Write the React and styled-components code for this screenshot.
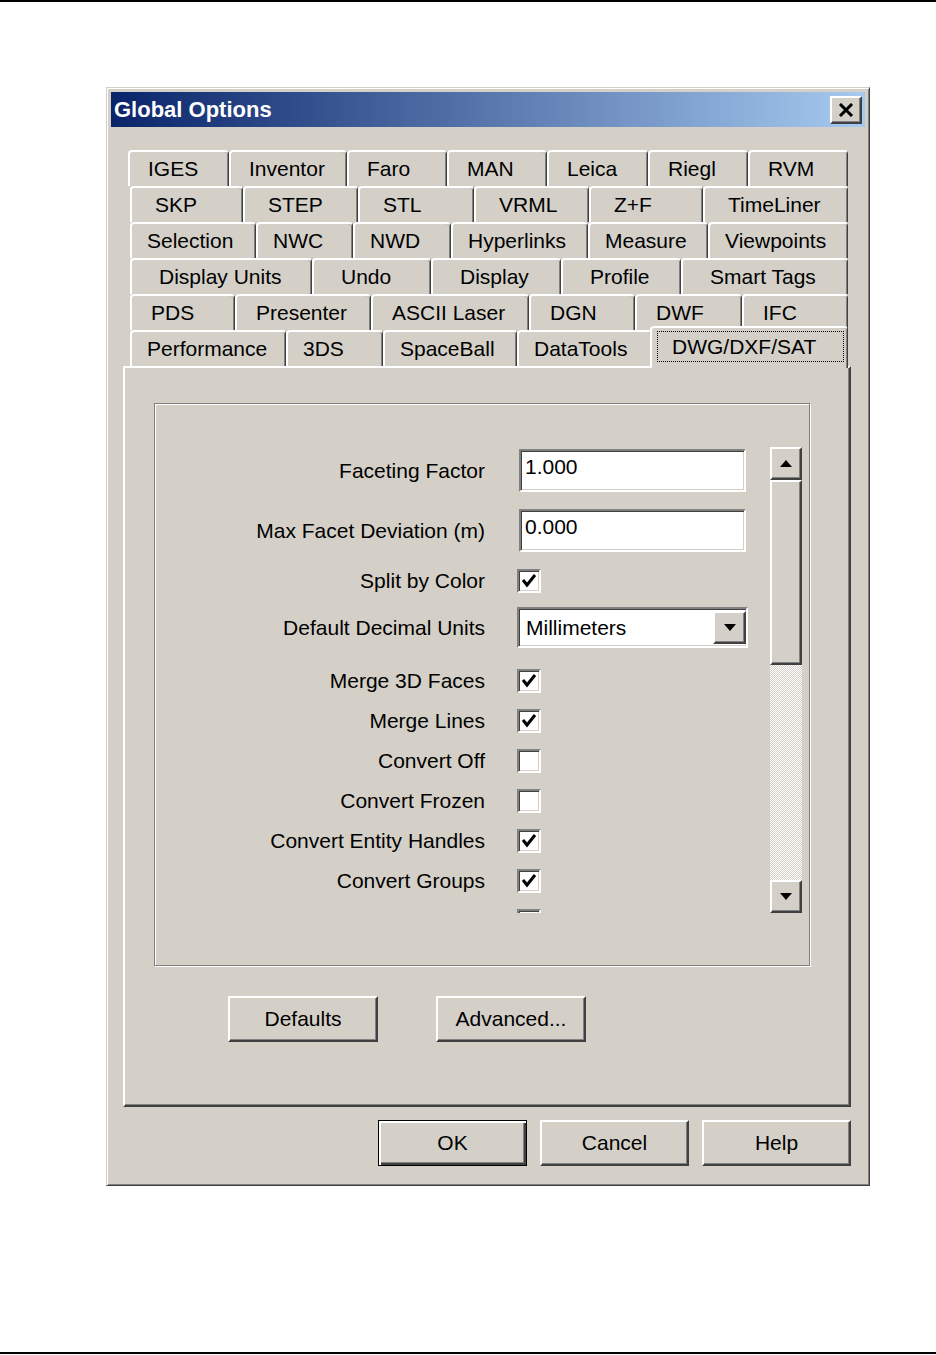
import React from 'react';
import styled, { createGlobalStyle, css } from 'styled-components';

const GlobalStyle = createGlobalStyle`
  html, body {
    margin: 0;
    padding: 0;
    background: #fff;
  }
  body {
    font-family: "Liberation Sans", Arial, sans-serif;
    color: #000;
  }
`;

const raised = css`
  border: 2px solid;
  border-color: #fff #404040 #404040 #fff;
  box-shadow: inset -1px -1px #808080;
`;

const sunken = css`
  border: 2px solid;
  border-color: #808080 #fff #fff #808080;
  box-shadow: inset 1px 1px #404040, inset -1px -1px #d4d0c8;
`;

const Page = styled.div`
  height: 1355px;
  display: flex;
  flex-direction: column;
`;

const Rule = styled.div`
  height: 2px;
  background: #000;
  flex-shrink: 0;
  margin-bottom: ${p => p.$mb || 0}px;
`;

const Spacer = styled.div`
  flex: 1;
`;

const Dialog = styled.div`
  width: 764px;
  height: 1099px;
  box-sizing: border-box;
  margin: 85px 0 0 106px;
  background: #d4d0c8;
  border: 1px solid;
  border-color: #d4d0c8 #404040 #404040 #d4d0c8;
  box-shadow: inset 1px 1px #fff, inset -1px -1px #808080;
  padding: 4px;
  display: flex;
  flex-direction: column;
`;

const TitleBar = styled.div`
  height: 35px;
  display: flex;
  align-items: center;
  justify-content: space-between;
  padding: 0 3px;
  background: linear-gradient(to right, #0a246a, #a6caf0);
  flex-shrink: 0;
`;

const TitleText = styled.span`
  color: #fff;
  font-weight: bold;
  font-size: 22px;
`;

const CloseButton = styled.div`
  width: 32px;
  height: 28px;
  box-sizing: border-box;
  background: #d4d0c8;
  ${raised};
  display: flex;
  align-items: center;
  justify-content: center;
`;

const Body = styled.div`
  margin: 23px 0 0 12px;
  width: 728px;
  display: flex;
  flex-direction: column;
`;

const TabRow = styled.div`
  height: 36px;
  display: flex;
  align-items: flex-end;
  padding-left: ${p => p.$indent}px;
`;

const Tab = styled.div`
  position: relative;
  box-sizing: border-box;
  width: ${p => p.$w}px;
  height: 36px;
  flex-shrink: 0;
  display: flex;
  align-items: center;
  justify-content: flex-start;
  padding-left: ${p => p.$pad - 2}px;
  background: #d4d0c8;
  border-top: 2px solid #fff;
  border-left: 2px solid #fff;
  border-right: 1px solid #404040;
  box-shadow: inset -1px 0 #808080;
  border-radius: 4px 4px 0 0;
  font-size: 21px;
  white-space: nowrap;

  ${p => p.$active && css`
    z-index: 1;
    width: ${p.$w + 2}px;
    height: 42px;
    margin: 0 -2px -2px -2px;
    padding: 3px 3px 6px 5px;
    align-items: stretch;
  `}
`;

const FocusBox = styled.span`
  flex: 1;
  display: flex;
  align-items: center;
  border: 1px dotted #000;
  padding-left: 14px;
`;

const Panel = styled.div`
  height: 741px;
  box-sizing: border-box;
  border: 2px solid;
  border-color: #fff #404040 #404040 #fff;
  box-shadow: inset -1px -1px #808080;
  padding: 35px 0 0 29px;
  display: flex;
  flex-direction: column;
`;

const GroupBox = styled.div`
  width: 656px;
  height: 563px;
  box-sizing: border-box;
  border: 1px solid #808080;
  box-shadow: inset 1px 1px #fff, 1px 1px #fff;
  padding: 43px 7px 0 1px;
  display: flex;
  align-items: flex-start;
`;

const Viewport = styled.div`
  flex: 1;
  height: 466px;
  overflow: hidden;
`;

const FieldRow = styled.div`
  display: flex;
  align-items: center;
  gap: 32px;
  height: ${p => p.$h}px;
  margin-top: ${p => p.$mt}px;
`;

const Label = styled.div`
  width: 329px;
  text-align: right;
  font-size: 21px;
  white-space: nowrap;
`;

const TextInput = styled.div`
  box-sizing: border-box;
  width: 227px;
  height: 43px;
  margin-left: 2px;
  background: #fff;
  ${sunken};
  font-size: 21px;
  padding: 4px 4px;
`;

const Select = styled.div`
  box-sizing: border-box;
  width: 231px;
  height: 41px;
  background: #fff;
  ${sunken};
  display: flex;
  align-items: center;
  justify-content: space-between;
  padding: 0 0 0 7px;
  font-size: 21px;
`;

const DropButton = styled.div`
  width: 33px;
  height: 33px;
  box-sizing: border-box;
  background: #d4d0c8;
  ${raised};
  display: flex;
  align-items: center;
  justify-content: center;
`;

const Check = styled.div`
  width: 24px;
  height: 24px;
  box-sizing: border-box;
  background: #fff;
  ${sunken};
  display: flex;
  align-items: center;
  justify-content: center;
`;

const ScrollBar = styled.div`
  width: 32px;
  height: 466px;
  display: flex;
  flex-direction: column;
`;

const ScrollButton = styled.div`
  height: 33px;
  box-sizing: border-box;
  background: #d4d0c8;
  ${raised};
  display: flex;
  align-items: center;
  justify-content: center;
  flex-shrink: 0;
`;

const Thumb = styled.div`
  height: 185px;
  box-sizing: border-box;
  background: #d4d0c8;
  ${raised};
  flex-shrink: 0;
`;

const Track = styled.div`
  flex: 1;
  background: repeating-conic-gradient(#fff 0 25%, #d4d0c8 0 50%) 0 0 / 2px 2px;
`;

const ButtonRow = styled.div`
  display: flex;
  gap: ${p => p.$gap}px;
  margin-top: ${p => p.$mt}px;
  padding-left: ${p => p.$pl || 0}px;
  justify-content: ${p => p.$end ? 'flex-end' : 'flex-start'};
`;

const Button = styled.div`
  width: ${p => p.$w}px;
  height: 46px;
  box-sizing: border-box;
  background: #d4d0c8;
  display: flex;
  align-items: center;
  justify-content: center;
  font-size: 21px;
  ${raised};
  ${p => p.$default && css`
    border: 1px solid #000;
    box-shadow: inset 2px 2px #fff, inset -2px -2px #404040, inset -3px -3px #808080;
  `}
`;

// text sits left-aligned in each tab; Windows spreads the spare room as padding per row
const tabRows = [
  { indent: 5, pad: 20, tabs: [['IGES', 101], ['Inventor', 118], ['Faro', 100], ['MAN', 100], ['Leica', 101], ['Riegl', 100], ['RVM', 100]] },
  { indent: 7, pad: 25, tabs: [['SKP', 113], ['STEP', 115], ['STL', 116], ['VRML', 115], ['Z+F', 114], ['TimeLiner', 145]] },
  { indent: 7, pad: 17, tabs: [['Selection', 126], ['NWC', 97], ['NWD', 98], ['Hyperlinks', 137], ['Measure', 120], ['Viewpoints', 140]] },
  { indent: 7, pad: 29, tabs: [['Display Units', 182], ['Undo', 119], ['Display', 130], ['Profile', 120], ['Smart Tags', 167]] },
  { indent: 7, pad: 21, tabs: [['PDS', 105], ['Presenter', 136], ['ASCII Laser', 158], ['DGN', 106], ['DWF', 107], ['IFC', 106]] },
  { indent: 7, pad: 17, tabs: [['Performance', 156], ['3DS', 97], ['SpaceBall', 134], ['DataTools', 135], ['DWG/DXF/SAT', 196]] },
];

const fields = [
  { label: 'Faceting Factor', type: 'text', value: '1.000', mt: 2 },
  { label: 'Max Facet Deviation (m)', type: 'text', value: '0.000', mt: 17 },
  { label: 'Split by Color', type: 'check', checked: true, mt: 17 },
  { label: 'Default Decimal Units', type: 'select', value: 'Millimeters', mt: 14 },
  { label: 'Merge 3D Faces', type: 'check', checked: true, mt: 21 },
  { label: 'Merge Lines', type: 'check', checked: true, mt: 16 },
  { label: 'Convert Off', type: 'check', checked: false, mt: 16 },
  { label: 'Convert Frozen', type: 'check', checked: false, mt: 16 },
  { label: 'Convert Entity Handles', type: 'check', checked: true, mt: 16 },
  { label: 'Convert Groups', type: 'check', checked: true, mt: 16 },
  { label: '', type: 'check', checked: false, mt: 16 },
];

const Arrow = ({ up }) => (
  <svg width="12" height="7" viewBox="0 0 12 7">
    <path d={up ? 'M0 7 L6 0 L12 7 Z' : 'M0 0 L12 0 L6 7 Z'} fill="#000" />
  </svg>
);

const CheckMark = () => (
  <svg width="16" height="16" viewBox="0 0 16 16">
    <path d="M2 7 L6 12 L14 2" fill="none" stroke="#000" strokeWidth="3" />
  </svg>
);

const Control = ({ f }) => {
  if (f.type === 'text') return <TextInput>{f.value}</TextInput>;
  if (f.type === 'select') {
    return (
      <Select>
        <span>{f.value}</span>
        <DropButton><Arrow /></DropButton>
      </Select>
    );
  }
  return <Check>{f.checked && <CheckMark />}</Check>;
};

const App = () => {
  return (
    <Page>
      <GlobalStyle />
      <Rule />
      <Dialog>
        <TitleBar>
          <TitleText>Global Options</TitleText>
          <CloseButton>
            <svg width="16" height="14" viewBox="0 0 16 14">
              <path d="M2 1 L14 13 M14 1 L2 13" stroke="#000" strokeWidth="3" />
            </svg>
          </CloseButton>
        </TitleBar>
        <Body>
          {tabRows.map((row, i) => (
            <TabRow key={i} $indent={row.indent}>
              {row.tabs.map(([name, w]) => {
                const active = name === 'DWG/DXF/SAT';
                return (
                  <Tab key={name} $w={w} $pad={row.pad} $active={active}>
                    {active ? <FocusBox>{name}</FocusBox> : name}
                  </Tab>
                );
              })}
            </TabRow>
          ))}
          <Panel>
            <GroupBox>
              <Viewport>
                {fields.map((f, i) => (
                  <FieldRow key={i} $mt={f.mt} $h={f.type === 'text' ? 43 : f.type === 'select' ? 41 : 24}>
                    <Label>{f.label}</Label>
                    <Control f={f} />
                  </FieldRow>
                ))}
              </Viewport>
              <ScrollBar>
                <ScrollButton><Arrow up /></ScrollButton>
                <Thumb />
                <Track />
                <ScrollButton><Arrow /></ScrollButton>
              </ScrollBar>
            </GroupBox>
            <ButtonRow $gap={58} $mt={30} $pl={74}>
              <Button $w={150}>Defaults</Button>
              <Button $w={150}>Advanced...</Button>
            </ButtonRow>
          </Panel>
          <ButtonRow $gap={13} $mt={13} $end>
            <Button $w={149} $default>OK</Button>
            <Button $w={149}>Cancel</Button>
            <Button $w={149}>Help</Button>
          </ButtonRow>
        </Body>
      </Dialog>
      <Spacer />
      <Rule $mb={1} />
    </Page>
  );
};

export default App;
